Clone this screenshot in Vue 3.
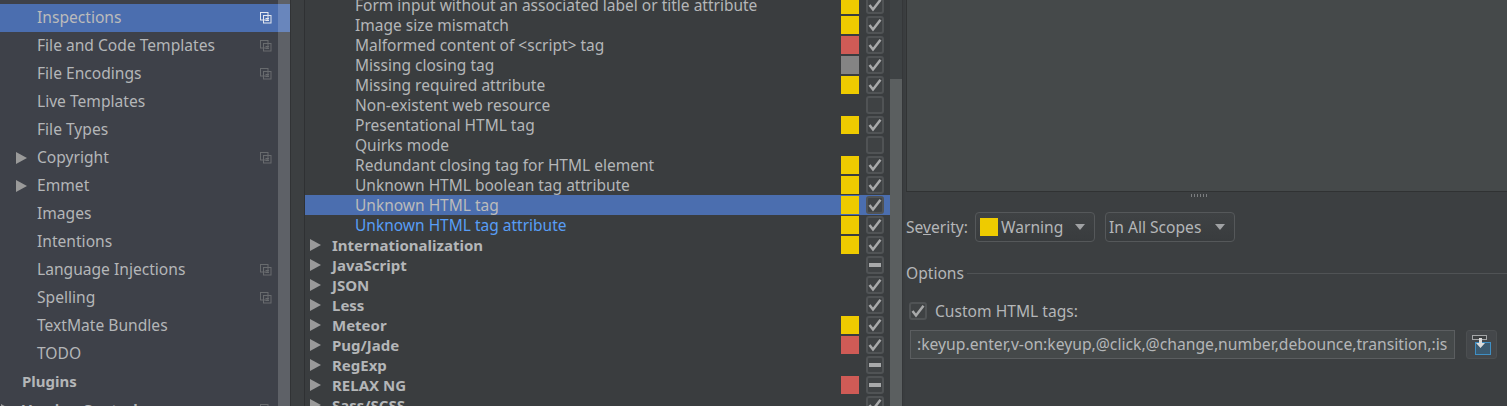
<script setup>
const settings = [
  { name: 'Inspections', copy: true, selected: true },
  { name: 'File and Code Templates', copy: true },
  { name: 'File Encodings', copy: true },
  { name: 'Live Templates' },
  { name: 'File Types' },
  { name: 'Copyright', copy: true, arrow: true },
  { name: 'Emmet', arrow: true },
  { name: 'Images' },
  { name: 'Intentions' },
  { name: 'Language Injections', copy: true },
  { name: 'Spelling', copy: true },
  { name: 'TextMate Bundles' },
  { name: 'TODO' },
  { name: 'Plugins', top: true },
  { name: 'Version Control', top: true, copy: true, arrow: true },
]

const inspections = [
  { name: 'Form input without an associated label or title attribute', sev: 'warn', state: 'on' },
  { name: 'Image size mismatch', sev: 'warn', state: 'on' },
  { name: 'Malformed content of <script> tag', sev: 'err', state: 'on' },
  { name: 'Missing closing tag', sev: 'gray', state: 'on' },
  { name: 'Missing required attribute', sev: 'warn', state: 'on' },
  { name: 'Non-existent web resource', state: 'off' },
  { name: 'Presentational HTML tag', sev: 'warn', state: 'on' },
  { name: 'Quirks mode', state: 'off' },
  { name: 'Redundant closing tag for HTML element', sev: 'warn', state: 'on' },
  { name: 'Unknown HTML boolean tag attribute', sev: 'warn', state: 'on' },
  { name: 'Unknown HTML tag', sev: 'warn', state: 'on', selected: true },
  { name: 'Unknown HTML tag attribute', sev: 'warn', state: 'on', link: true },
  { name: 'Internationalization', sev: 'warn', state: 'on', group: true },
  { name: 'JavaScript', state: 'mixed', group: true },
  { name: 'JSON', state: 'on', group: true },
  { name: 'Less', state: 'on', group: true },
  { name: 'Meteor', sev: 'warn', state: 'on', group: true },
  { name: 'Pug/Jade', sev: 'err', state: 'on', group: true },
  { name: 'RegExp', state: 'mixed', group: true },
  { name: 'RELAX NG', sev: 'err', state: 'mixed', group: true },
  { name: 'Sass/SCSS', state: 'on', group: true },
]

const tagValue = ':keyup.enter,v-on:keyup,@click,@change,number,debounce,transition,:is'
</script>

<template>
  <div class="page">
    <aside class="sidebar">
      <div class="side-list">
        <div
          v-for="item in settings"
          :key="item.name"
          class="side-row"
          :class="{ selected: item.selected, top: item.top }"
        >
          <span v-if="item.arrow" class="arrow side-arrow"></span>
          <span class="side-name">{{ item.name }}</span>
          <svg v-if="item.copy" class="copy" width="12" height="12" viewBox="0 0 12 12" fill="none">
            <rect x=".5" y=".5" width="7.500" height="7.500" stroke="currentColor" />
            <rect x="3.500" y="3.500" width="7.500" height="7.500" class="copy-box" stroke="currentColor" />
            <path d="M5.500 6.500h3.500M5.500 8.500h3.500" stroke="currentColor" />
          </svg>
        </div>
      </div>
      <div class="side-thumb"></div>
    </aside>

    <div class="gutter"></div>

    <section class="tree">
      <div class="tree-rows">
        <div
          v-for="row in inspections"
          :key="row.name"
          class="tree-row"
          :class="{ selected: row.selected, group: row.group, link: row.link }"
        >
          <span v-if="row.group" class="arrow tree-arrow"></span>
          <span class="tree-name">{{ row.name }}</span>
          <span class="sev" :class="row.sev"></span>
          <span class="check">
            <svg v-if="row.state === 'on'" width="14" height="14" viewBox="0 0 14 14" fill="none">
              <path d="M1.500 7l3.500 4.500L12.500 1.800" stroke="#a8a9aa" stroke-width="2.500" />
            </svg>
            <span v-if="row.state === 'mixed'" class="dash"></span>
          </span>
        </div>
      </div>
      <div class="tree-scroll"><div class="tree-thumb"></div></div>
    </section>

    <section class="details">
      <div class="description"></div>
      <div class="splitter"></div>

      <div class="severity">
        <label class="sev-label">Se<u>v</u>erity:</label>
        <div class="combo combo-sev">
          <span class="sev warn"></span>
          <span class="combo-text">Warning</span>
          <span class="caret"></span>
        </div>
        <div class="combo combo-scope">
          <span class="combo-text">In All Scopes</span>
          <span class="caret"></span>
        </div>
      </div>

      <div class="options-head">
        <span>Options</span>
        <span class="options-line"></span>
      </div>

      <div class="custom-tags">
        <span class="check">
          <svg width="14" height="14" viewBox="0 0 14 14" fill="none">
            <path d="M1.500 7l3.500 4.500L12.500 1.800" stroke="#a8a9aa" stroke-width="2.500" />
          </svg>
        </span>
        <span>Custom HTML tags:</span>
      </div>

      <div class="tags-row">
        <div class="tags-input">{{ tagValue }}</div>
        <button class="tags-button">
          <svg width="20" height="20" viewBox="0 0 20 20" fill="none">
            <rect x="3.500" y="7.500" width="15" height="12" fill="#3b5a70" stroke="#3f8fc4" />
            <rect x=".5" y=".5" width="14" height="4" fill="#3c3f41" stroke="#a4a6a8" />
            <path d="M7 3h3v5h3l-4.500 5L4 8h3z" fill="#dcdcdc" />
          </svg>
        </button>
      </div>
    </section>
  </div>
</template>

<style>
html, body {
  margin: 0;
  background: #3c3f41;
}
</style>

<style scoped>
.page {
  display: flex;
  width: 1507px;
  height: 406px;
  overflow: hidden;
  background: #3c3f41;
  color: #b4b6b8;
  font-family: "Noto Sans", "Open Sans", sans-serif;
  font-size: 15.6px;
}

.sidebar {
  position: relative;
  flex: none;
  width: 290px;
  height: 406px;
  padding-top: 4px;
  box-sizing: border-box;
  background: #3e4149;
  overflow: hidden;
}
.side-row {
  position: relative;
  display: flex;
  align-items: center;
  height: 28px;
  padding-left: 37px;
  white-space: nowrap;
}
.side-name {
  margin-top: -2px;
}
.side-row.top {
  padding-left: 22px;
  font-size: 15px;
  font-weight: 700;
}
.side-row.selected {
  background: #4b6eaf;
  color: #bbbbbb;
}
.arrow {
  position: absolute;
  width: 0;
  height: 0;
  border-left: 11px solid #9a9a9a;
  border-top: 6px solid transparent;
  border-bottom: 6px solid transparent;
}
.side-arrow {
  left: 16px;
  top: 8px;
}
.top .side-arrow {
  left: 1px;
}
.copy {
  position: absolute;
  left: 260px;
  top: 8px;
  color: #686b6e;
}
.selected .copy {
  color: #e2e6ee;
}
.side-thumb {
  position: absolute;
  left: 278px;
  top: 0;
  width: 12px;
  height: 100%;
  background: rgba(255, 255, 255, 0.17);
}

.gutter {
  flex: none;
  width: 13px;
  border-left: 1px solid #313335;
  border-right: 1px solid #2f3133;
  background: #3c3f41;
}

.tree {
  display: flex;
  flex: none;
  width: 600px;
  height: 406px;
  background: #3a3d3f;
  overflow: hidden;
}
.tree-rows {
  flex: none;
  width: 585px;
  margin-top: -5px;
}
.tree-row {
  position: relative;
  display: flex;
  align-items: center;
  height: 20px;
  padding-left: 50px;
  white-space: nowrap;
  font-size: 15.5px;
}
.tree-row.group {
  padding-left: 27px;
  font-size: 15px;
  font-weight: 700;
}
.tree-row.selected {
  background: #4b6eaf;
  color: #bbbbbb;
}
.tree-row.link {
  color: #589df6;
}
.tree-arrow {
  left: 5px;
  top: 4px;
}
.tree-name {
  flex: 1;
}
.sev {
  display: block;
  flex: none;
  width: 18px;
  height: 18px;
}
.sev.warn {
  background: #eecb00;
}
.sev.err {
  background: #cf5b56;
}
.sev.gray {
  background: #848484;
}
.tree-row .sev {
  margin-right: 7px;
}
.check {
  display: flex;
  flex: none;
  align-items: center;
  justify-content: center;
  width: 18px;
  height: 18px;
  box-sizing: border-box;
  border: 2px solid #505355;
  border-radius: 3px;
  background: #3f4244;
}
.tree-row .check {
  margin-right: 6px;
}
.dash {
  display: block;
  width: 12px;
  height: 4px;
  background: #a8a9aa;
}
.tree-scroll {
  flex: none;
  width: 12px;
  border-right: 1px solid #353739;
  background: #3e4244;
}
.tree-thumb {
  height: 327px;
  margin-top: 79px;
  background: #5b5f60;
}

.details {
  flex: 1;
  min-width: 0;
  padding-left: 1px;
}
.description {
  height: 191px;
  background: #45494a;
  border-left: 1px solid #323435;
  border-bottom: 1px solid #303233;
}
.splitter {
  width: 18px;
  height: 3px;
  margin: 2px 0 0 285px;
  background: repeating-linear-gradient(90deg, #7c7e80 0 1px, transparent 1px 3px);
}
.severity {
  display: flex;
  align-items: center;
  height: 30px;
  margin-top: 15px;
}
.sev-label {
  flex: none;
  width: 69px;
  white-space: nowrap;
}
.combo {
  display: flex;
  flex: none;
  align-items: center;
  height: 30px;
  box-sizing: border-box;
  border: 1px solid #55585a;
  border-radius: 4px;
  background: linear-gradient(#3f4244, #393c3e);
}
.combo-sev {
  width: 120px;
  padding-left: 4px;
}
.combo-scope {
  width: 130px;
  margin-left: 10px;
  padding-left: 3px;
}
.combo-sev .combo-text {
  margin-left: 3px;
}
.caret {
  width: 0;
  height: 0;
  margin-left: auto;
  margin-right: 9px;
  border-top: 6px solid #a0a2a4;
  border-left: 5px solid transparent;
  border-right: 5px solid transparent;
}
.options-head {
  display: flex;
  align-items: center;
  gap: 3px;
  height: 20px;
  margin-top: 21px;
}
.options-line {
  flex: 1;
  height: 1px;
  background: #505355;
}
.custom-tags {
  display: flex;
  align-items: center;
  gap: 8px;
  height: 20px;
  margin-top: 18px;
  padding-left: 3px;
}
.tags-row {
  display: flex;
  align-items: center;
  gap: 11px;
  margin-top: 9px;
  padding-left: 4px;
}
.tags-input {
  width: 545px;
  height: 29px;
  box-sizing: border-box;
  padding-left: 6px;
  border: 1px solid #5b5e60;
  background: #45494a;
  font-size: 15.7px;
  line-height: 27px;
  white-space: nowrap;
  overflow: hidden;
}
.tags-button {
  display: flex;
  align-items: center;
  justify-content: center;
  width: 31px;
  height: 29px;
  padding: 0;
  border: 1px solid #4c4f51;
  border-radius: 3px;
  background: #44474a;
}
</style>
